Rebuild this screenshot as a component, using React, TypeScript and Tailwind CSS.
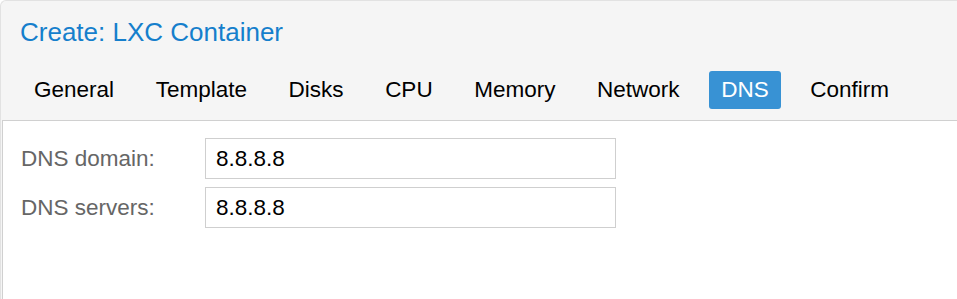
const tabs = ["General", "Template", "Disks", "CPU", "Memory", "Network", "DNS", "Confirm"];

const fields = [
  { label: "DNS domain:", value: "8.8.8.8" },
  { label: "DNS servers:", value: "8.8.8.8" },
];

export default function App() {
  const active = "DNS";

  return (
    <div className="w-full h-[299px] flex flex-col bg-[#f5f5f5] border-l border-t border-[#e2e2e2] rounded-tl-[6px] overflow-hidden font-['Liberation_Sans',Arial,sans-serif]">
      <div className="h-[61px] flex items-center pl-[19px]">
        <h1 className="text-[26px] leading-[30px] text-[#157fcc]">Create: LXC Container</h1>
      </div>

      <div className="flex gap-[17.6px] pl-[21px] mt-[9px] mb-[11px]">
        {tabs.map((tab) => (
          <button
            key={tab}
            className={`h-[38px] px-3 rounded-[3px] text-[22.5px] leading-[38px] ${
              tab === active ? "bg-[#3892d4] text-white" : "text-black"
            }`}
          >
            {tab}
          </button>
        ))}
      </div>

      <div className="flex-1 ml-px bg-white border-l border-t border-[#d0d0d0] pl-[18px] pt-[17px] flex flex-col gap-[8px]">
        {fields.map((field) => (
          <div key={field.label} className="flex items-center">
            <label className="w-[184px] text-[22.5px] text-[#666666]">{field.label}</label>
            <input
              readOnly
              value={field.value}
              className="w-[411px] h-[41px] border border-[#cfcfcf] pl-[10px] pt-px text-[22.5px] text-black outline-none bg-white"
            />
          </div>
        ))}
      </div>
    </div>
  );
}
